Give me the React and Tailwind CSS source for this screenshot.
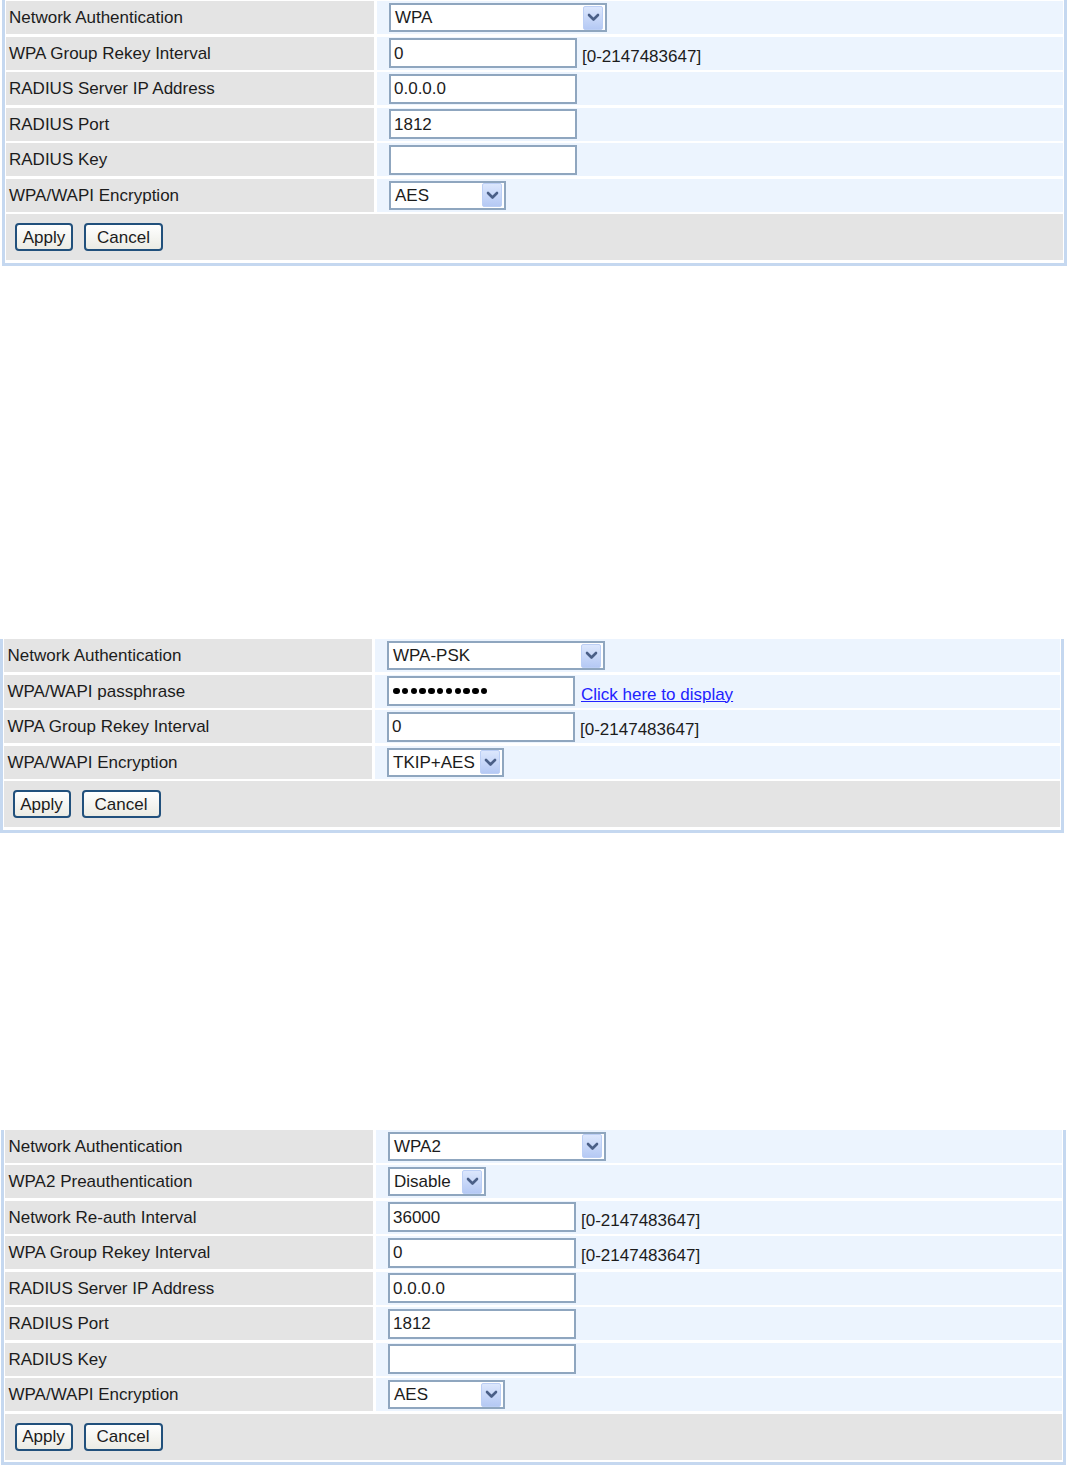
import React from "react";

const font = { fontFamily: '"Liberation Sans", Arial, sans-serif' };

const Select = ({ value, width }) => (
  <div
    className={`flex items-center justify-between h-[29px] bg-white border-2 border-[#8fa6bf] pl-[4px] pr-[2px] ${width}`}
  >
    <span className="text-[17px] leading-none text-[#1c1c1c]">{value}</span>
    <span className="flex items-center justify-center w-[20px] h-[24px] rounded-[2px] border border-[#bccff5] bg-gradient-to-b from-[#dce7fd] to-[#b5c9f4]">
      <svg width="13" height="9" viewBox="0 0 13 9" fill="none">
        <path d="M2 2 L6.5 6.5 L11 2" stroke="#4a5f87" strokeWidth="2.6" strokeLinecap="round" strokeLinejoin="round" />
      </svg>
    </span>
  </div>
);

const Input = ({ value }) => (
  <div className="flex items-center w-[188px] h-[30px] bg-white border-2 border-[#8fa6bf] pl-[3px] text-[17px] leading-none text-[#1c1c1c]">
    {value}
  </div>
);

const Password = () => (
  <div className="flex items-center gap-[2.3px] w-[188px] h-[30px] bg-white border-2 border-[#8fa6bf] pl-[4px]">
    {Array.from({ length: 11 }).map((_, i) => (
      <span key={i} className="block w-[6.5px] h-[6.5px] rounded-full bg-black" />
    ))}
  </div>
);

const Range = () => (
  <span className="ml-[5px] mt-[6px] text-[17px] leading-none text-[#1c1c1c]">[0-2147483647]</span>
);

const Button = ({ children, width }) => (
  <button
    className={`h-[28px] ${width} rounded-[4px] border-2 border-[#21507c] bg-gradient-to-b from-white to-[#ebebe4] text-[17px] leading-none text-[#1c1c1c]`}
  >
    {children}
  </button>
);

const Panel = ({ rows, className, labelPad, buttonPad }) => (
  <div
    className={`flex flex-col gap-[2.5px] border-x-[3px] border-b-[3px] border-[#c5d8f0] px-[1px] pb-[2.5px] ${className}`}
  >
    {rows.map((row) => (
      <div key={row.label} className="flex gap-[3px] h-[33px]">
        <div className={`flex items-center w-[368px] shrink-0 bg-[#e4e4e4] ${labelPad} text-[17px] leading-none text-[#1c1c1c]`}>
          {row.label}
        </div>
        <div className="flex items-center flex-1 bg-[#ecf4fe] pl-[12px]">{row.field}</div>
      </div>
    ))}
    <div className={`flex items-center gap-[11px] h-[46px] bg-[#e4e4e4] ${buttonPad}`}>
      <Button width="w-[58px]">Apply</Button>
      <Button width="w-[79px]">Cancel</Button>
    </div>
  </div>
);

const wpaRows = [
  { label: "Network Authentication", field: <Select value="WPA" width="w-[218px]" /> },
  { label: "WPA Group Rekey Interval", field: <><Input value="0" /><Range /></> },
  { label: "RADIUS Server IP Address", field: <Input value="0.0.0.0" /> },
  { label: "RADIUS Port", field: <Input value="1812" /> },
  { label: "RADIUS Key", field: <Input value="" /> },
  { label: "WPA/WAPI Encryption", field: <Select value="AES" width="w-[117px]" /> },
];

const pskRows = [
  { label: "Network Authentication", field: <Select value="WPA-PSK" width="w-[218px]" /> },
  {
    label: "WPA/WAPI passphrase",
    field: (
      <>
        <Password />
        <a href="#" className="ml-[6px] mt-[6px] text-[17px] leading-none text-[#2222ff] underline">
          Click here to display
        </a>
      </>
    ),
  },
  { label: "WPA Group Rekey Interval", field: <><Input value="0" /><Range /></> },
  { label: "WPA/WAPI Encryption", field: <Select value="TKIP+AES" width="w-[117px]" /> },
];

const wpa2Rows = [
  { label: "Network Authentication", field: <Select value="WPA2" width="w-[218px]" /> },
  { label: "WPA2 Preauthentication", field: <Select value="Disable" width="w-[98px]" /> },
  { label: "Network Re-auth Interval", field: <><Input value="36000" /><Range /></> },
  { label: "WPA Group Rekey Interval", field: <><Input value="0" /><Range /></> },
  { label: "RADIUS Server IP Address", field: <Input value="0.0.0.0" /> },
  { label: "RADIUS Port", field: <Input value="1812" /> },
  { label: "RADIUS Key", field: <Input value="" /> },
  { label: "WPA/WAPI Encryption", field: <Select value="AES" width="w-[117px]" /> },
];

export default function App() {
  return (
    <div className="w-[1070px] h-[1469px] bg-white overflow-hidden" style={font}>
      <Panel rows={wpaRows} className="ml-[2px] w-[1065px] pt-[1px]" labelPad="pl-[3px]" buttonPad="pl-[9px]" />
      <Panel rows={pskRows} className="mt-[373.5px] ml-0 w-[1064px]" labelPad="pl-[3.5px]" buttonPad="pl-[8.5px]" />
      <Panel rows={wpa2Rows} className="mt-[297px] ml-[1px] w-[1065px]" labelPad="pl-[3.5px]" buttonPad="pl-[9.5px]" />
    </div>
  );
}
